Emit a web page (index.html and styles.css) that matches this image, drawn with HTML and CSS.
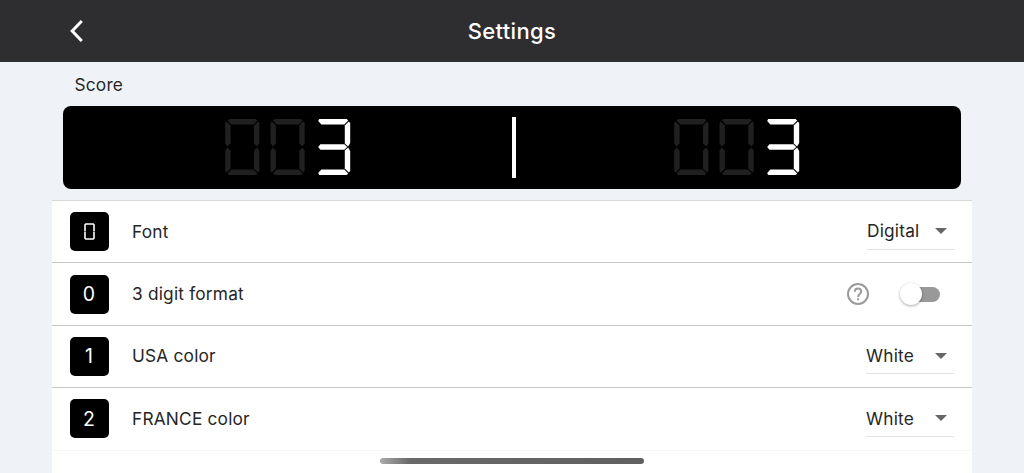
FILE: index.html
```
<!DOCTYPE html>
<html lang="en">
<head>
    <meta charset="utf-8">
    <title>Settings</title>
    <link rel="stylesheet" href="styles.css">
</head>

<body>
    <!-- seven segment shapes shared by the scoreboard -->
    <svg class="defs" width="0" height="0">
        <defs>
            <path id="seg-a" d="M4.2 0H30.8L32.4 1.5L28.5 5.5H6.5L2.6 1.5Z"/>
            <path id="seg-b" d="M34.4 4V24L32.3 27.6L29 24.5V6.6L33 2.6Z"/>
            <path id="seg-c" d="M34.4 52V32L32.3 28.4L29 31.5V49.4L33 53.4Z"/>
            <path id="seg-d" d="M4.2 56H30.8L32.4 54.5L28.5 50.5H6.5L2.6 54.5Z"/>
            <path id="seg-e" d="M0.2 52V32L2.3 28.4L5.6 31.5V49.4L1.6 53.4Z"/>
            <path id="seg-f" d="M0.2 4V24L2.3 27.6L5.6 24.5V6.6L1.6 2.6Z"/>
            <g id="zero">
                <use href="#seg-a"/><use href="#seg-b"/><use href="#seg-c"/>
                <use href="#seg-d"/><use href="#seg-e"/><use href="#seg-f"/>
            </g>
            <g id="three">
                <path d="M3.4 0H30.8L32.4 1.5L28.5 5.5H5.6L2.4 2Z"/>
                <path d="M4.6 25.2H28.5L31.5 28L28.5 30.8H4.6L2.4 28Z"/>
                <path d="M3.4 56H30.8L32.4 54.5L28.5 50.5H5.6L2.4 54Z"/>
                <use href="#seg-b"/><use href="#seg-c"/>
            </g>
        </defs>
    </svg>

    <header class="navbar">
        <svg class="back" width="16" height="24" viewBox="0 0 16 24">
            <path d="M12.8 2L3.2 12L12.8 22"/>
        </svg>
        <h1>Settings</h1>
    </header>

    <main class="content">
        <h2>Score</h2>
        <div class="scoreboard">
            <div class="team home">
                <svg width="126" height="56" viewBox="0 0 126 56">
                    <use class="off" href="#zero"/>
                    <use class="off" href="#zero" x="45.3"/>
                    <use class="on" href="#three" x="90.8"/>
                </svg>
            </div>
            <div class="divider"></div>
            <div class="team away">
                <svg width="126" height="56" viewBox="0 0 126 56">
                    <use class="off" href="#zero"/>
                    <use class="off" href="#zero" x="45.3"/>
                    <use class="on" href="#three" x="90.8"/>
                </svg>
            </div>
        </div>

        <ul class="list">
            <li class="row">
                <span class="tile">
                    <svg width="11" height="17" viewBox="0 0 11 17">
                        <path d="M1 8.2V1.8L1.8 1H9.2L10 1.8V8.2M1 8.8V15.2L1.8 16H9.2L10 15.2V8.8"/>
                    </svg>
                </span>
                <span class="label">Font</span>
                <span class="select digital">Digital<i class="arrow"></i></span>
            </li>
            <li class="row">
                <span class="tile">0</span>
                <span class="label">3 digit format</span>
                <svg class="help" width="22" height="22" viewBox="0 0 22 22">
                    <circle cx="11" cy="11" r="10"/>
                    <path d="M7.8 8.8C7.8 6.8 9 5.5 11 5.5S14.2 6.8 14.2 8.6C14.2 11 11 11.2 11 14"/>
                    <path d="M11 15.3V17.3"/>
                </svg>
                <span class="switch"><i class="knob"></i></span>
            </li>
            <li class="row">
                <span class="tile">1</span>
                <span class="label">USA color</span>
                <span class="select">White<i class="arrow"></i></span>
            </li>
            <li class="row">
                <span class="tile">2</span>
                <span class="label">FRANCE color</span>
                <span class="select">White<i class="arrow"></i></span>
            </li>
        </ul>
    </main>

    <div class="home-indicator"></div>
</body>
</html>
```
FILE: styles.css
```
* {
    box-sizing: border-box;
}

body {
    margin: 0;
    height: 473px;
    overflow: hidden;
    background: #eff3f8;
    color: #262626;
    font-family: Inter, "Liberation Sans", sans-serif;
    font-size: 17.3px;
    letter-spacing: 0.2px;
}

.defs {
    display: block;
}

.navbar {
    display: grid;
    grid-template-columns: 85px 1fr 85px;
    align-items: center;
    height: 62px;
    background: #2e2e30;
    color: #fff;
}

.navbar h1 {
    margin: 0;
    font-size: 22px;
    font-weight: 500;
    line-height: 28px;
    letter-spacing: 0.35px;
    text-align: center;
}

.back {
    justify-self: end;
    fill: none;
    stroke: #fff;
    stroke-width: 3;
}

.content {
    display: flex;
    flex-direction: column;
    width: 920px;
    height: 411px;
    margin-left: 52px;
}

.content h2 {
    margin: 0;
    padding-left: 22.5px;
    height: 44px;
    font-size: 17.3px;
    font-weight: 400;
    line-height: 46px;
}

.scoreboard {
    display: grid;
    grid-template-columns: 449px 3.5px 1fr;
    align-items: center;
    height: 83px;
    margin: 0 11px 11px;
    border-radius: 8px;
    background: #000;
}

.team {
    display: flex;
    justify-content: center;
    padding-bottom: 1.5px;
}

.home {
    padding-left: 1px;
}

.away {
    padding-right: 3px;
}

.divider {
    height: 61px;
    background: #fff;
}

.off {
    fill: #202020;
}

.on {
    fill: #fff;
}

.list {
    flex: 1;
    margin: 0;
    padding: 0;
    list-style: none;
    background: #fff;
    border-top: 1px solid #d5d7da;
}

.row {
    display: flex;
    align-items: center;
    height: 62.4px;
    padding: 0 18px;
    border-bottom: 1px solid #c6c6c6;
}

.row:last-child {
    border-color: #f7f7f7;
}

.tile {
    display: flex;
    align-items: center;
    justify-content: center;
    width: 39px;
    height: 39px;
    padding-right: 1px;
    border-radius: 5px;
    background: #000;
    color: #fff;
    font-size: 19.5px;
    letter-spacing: 0;
}

.tile svg {
    fill: none;
    stroke: #fff;
    stroke-width: 1.6;
}

.label {
    flex: 1;
    padding: 0 0 1px 23px;
}

.select {
    display: flex;
    align-items: center;
    justify-content: space-between;
    width: 88px;
    height: 36px;
    padding-right: 7px;
    border-bottom: 1px solid #e2e2e2;
}

.digital {
    width: 87px;
    padding-bottom: 1px;
}

.arrow {
    border: 6px solid transparent;
    border-top-color: #666;
    border-bottom: 0;
}

.help {
    margin-right: 31px;
    fill: none;
    stroke: #9a9a9a;
    stroke-width: 2;
}

.switch {
    display: flex;
    align-items: center;
    width: 40px;
    height: 15px;
    margin-right: 14px;
    border-radius: 8px;
    background: linear-gradient(to right, transparent 12px, #999 12px);
}

.knob {
    width: 22px;
    height: 22px;
    flex: none;
    border-radius: 50%;
    background: #fff;
    box-shadow: 0 1px 3px rgba(0, 0, 0, 0.35);
}

/* system bar lying over the list */
.home-indicator {
    position: absolute;
    left: 380px;
    bottom: 9px;
    width: 264px;
    height: 6px;
    border-radius: 3px;
    background: linear-gradient(to right, #aaa, #696969 30px, #606060);
}
```
